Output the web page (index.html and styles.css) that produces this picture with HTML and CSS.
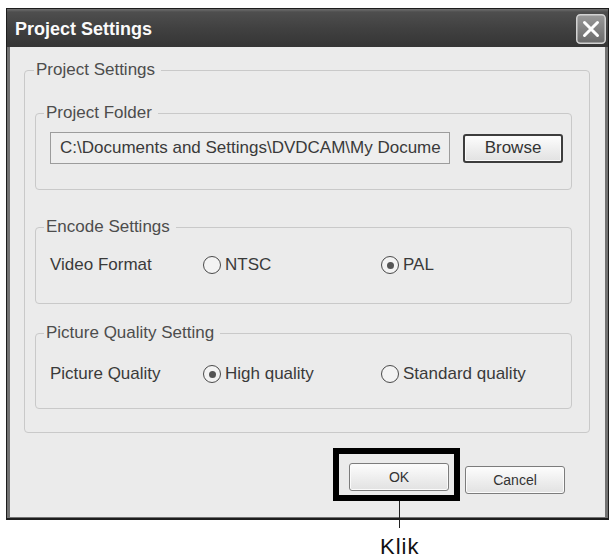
FILE: index.html
```html
<!DOCTYPE html>
<html lang="en">
<head>
<meta charset="utf-8">
<title>Project Settings</title>
<link rel="stylesheet" href="styles.css">
</head>
<body>
<div class="window">
  <div class="titlebar">
    <span class="title">Project Settings</span>
    <button class="close" aria-label="Close">
      <svg width="30" height="30" viewBox="0 0 30 30">
        <defs>
          <linearGradient id="cg" x1="0" y1="0" x2="0" y2="1">
            <stop offset="0" stop-color="#9a9a9a"/>
            <stop offset="1" stop-color="#6a6a6a"/>
          </linearGradient>
        </defs>
        <rect x="0.75" y="0.75" width="28.5" height="28.5" rx="3.5" fill="url(#cg)" stroke="#d2d2d2" stroke-width="1.5"/>
        <path d="M8.5 8.5 L21.5 21.5 M21.5 8.5 L8.5 21.5" stroke="#fff" stroke-width="3" stroke-linecap="round"/>
      </svg>
    </button>
  </div>
  <div class="body">
    <fieldset class="group outer">
      <legend>Project Settings</legend>
      <fieldset class="group inner folder">
        <legend>Project Folder</legend>
        <div class="path-row">
          <div class="path">C:\Documents and Settings\DVDCAM\My Docume</div>
          <button class="btn browse">Browse</button>
        </div>
      </fieldset>
      <fieldset class="group inner encode">
        <legend>Encode Settings</legend>
        <div class="opt-row">
          <span class="label">Video Format</span>
          <span class="radio"><span class="dot"></span>NTSC</span>
          <span class="radio checked"><span class="dot"></span>PAL</span>
        </div>
      </fieldset>
      <fieldset class="group inner quality">
        <legend>Picture Quality Setting</legend>
        <div class="opt-row">
          <span class="label">Picture Quality</span>
          <span class="radio checked"><span class="dot"></span>High quality</span>
          <span class="radio"><span class="dot"></span>Standard quality</span>
        </div>
      </fieldset>
    </fieldset>
    <div class="actions">
      <div class="callout"><button class="btn action">OK</button></div>
      <button class="btn action cancel">Cancel</button>
    </div>
  </div>
</div>
<div class="caption">Klik</div>
</body>
</html>
```

FILE: styles.css
```css
body {
  margin: 0;
  background: #fff;
  font-family: "Liberation Sans", Arial, sans-serif;
}

.window {
  box-sizing: border-box;
  width: 603px;
  height: 512px;
  margin: 8px 0 0 6px;
  border: 1px solid #1d1d1d;
  border-bottom-width: 2px;
  display: flex;
  flex-direction: column;
  background: #ebebeb;
}

.titlebar {
  height: 38px;
  flex: none;
  display: flex;
  align-items: center;
  justify-content: space-between;
  padding: 0 2px 0 8px;
  background: linear-gradient(#707070, #4e4e4e 3px, #414141 50%, #353535 100%);
}

.title {
  color: #fafafa;
  font-weight: bold;
  font-size: 18px;
  padding-top: 3px;
}

.close {
  width: 30px;
  height: 30px;
  padding: 0;
  border: none;
  background: none;
  margin-top: 2px;
  display: block;
}

.close svg {
  display: block;
}

.body {
  flex: 1;
  border: solid #727272;
  border-width: 0 3px 1px 3px;
  display: flex;
  flex-direction: column;
}

.group {
  border: 1px solid #c9c9c9;
  border-radius: 4px;
  margin: 0;
  min-width: 0;
}

.group > legend {
  font-size: 17px;
  line-height: 20px;
  color: #4d4d4d;
  padding: 0 6px 0 2px;
}

.outer {
  margin: 13px 15px 0 14px;
  padding: 23px 17px 23px 10px;
}

.outer > legend {
  margin-left: -1px;
}

.inner {
  padding: 9px 8px 25px 14px;
}

.inner > legend {
  margin-left: -6px;
}

.encode {
  margin-top: 27px;
  padding-top: 16px;
  padding-bottom: 26px;
}

.quality {
  margin-top: 19px;
  padding-top: 19px;
  padding-bottom: 22px;
}

.path-row {
  display: flex;
  align-items: center;
  gap: 13px;
}

.path {
  box-sizing: border-box;
  width: 400px;
  height: 32px;
  border: 1px solid #9c9c9c;
  padding-left: 9px;
  font-size: 17px;
  line-height: 30px;
  color: #3a3a3a;
  white-space: nowrap;
  overflow: hidden;
  background: #eeeeee;
}

.btn {
  font-family: inherit;
  color: #333;
  border: 1px solid #7c7c7c;
  border-radius: 3px;
  background: linear-gradient(#fdfdfd, #ececec 60%, #e2e2e2);
  box-shadow: inset 0 0 0 1px #fbfbfb;
  padding: 0;
  box-sizing: border-box;
}

.browse {
  width: 100px;
  height: 29px;
  font-size: 17px;
  border: 2px solid #3d3d3d;
}

.opt-row {
  display: grid;
  grid-template-columns: 153px 178px auto;
  align-items: center;
  height: 24px;
  font-size: 17px;
  color: #3a3a3a;
}

.radio {
  display: flex;
  align-items: center;
  gap: 4px;
}

.dot {
  box-sizing: border-box;
  width: 18px;
  height: 18px;
  border: 1.5px solid #4a4a4a;
  border-radius: 50%;
  background: #f3f3f3;
  display: grid;
  place-items: center;
}

.checked .dot::after {
  content: "";
  width: 7px;
  height: 7px;
  border-radius: 50%;
  background: #555;
}

.actions {
  display: flex;
  justify-content: flex-end;
  align-items: flex-start;
  gap: 5px;
  margin: 15px 40px 0 0;
}

.callout {
  border: 6px solid #000;
  padding: 9px 5px 4px 10px;
  position: relative;
}

.callout::after {
  content: "";
  position: absolute;
  left: 60px;
  top: calc(100% + 6px);
  width: 1px;
  height: 27px;
  background: #222;
}

.action {
  display: block;
  width: 100px;
  height: 28px;
  font-size: 14px;
}

.cancel {
  margin-top: 18px;
}

.caption {
  margin: 17px 0 0 380px;
  font-size: 22px;
  line-height: 20px;
  letter-spacing: 1px;
  color: #111;
}
```
